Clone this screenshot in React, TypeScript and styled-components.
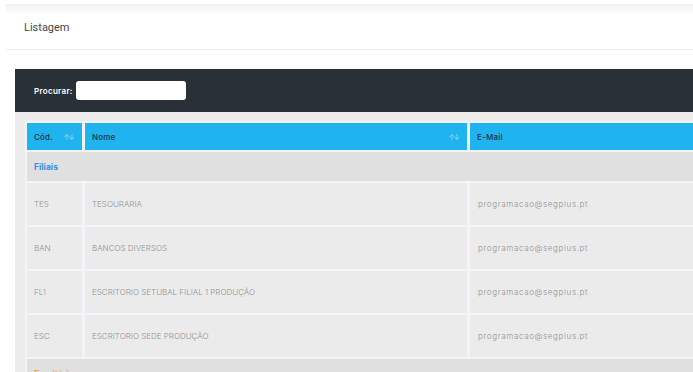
import * as React from "react";
import styled, { createGlobalStyle } from "styled-components";

const GlobalStyle = createGlobalStyle`
  html, body {
    margin: 0;
    padding: 0;
    overflow: hidden;
    background: #ffffff;
  }
`;

const Page = styled.div`
  width: 900px;
  padding: 4px 0 0 6px;
  box-sizing: border-box;
`;

const Card = styled.div`
  background: linear-gradient(#f1f1f1 0px, #ffffff 11px);
`;

const CardHeader = styled.div`
  height: 46px;
  display: flex;
  align-items: center;
  padding-left: 18px;
  border-bottom: 1px solid #ececec;
  box-sizing: border-box;
`;

const Title = styled.h4`
  margin: 0;
  padding-top: 1px;
  font-family: Roboto, "Liberation Sans", sans-serif;
  font-size: 11px;
  font-weight: 400;
  color: #474747;
`;

const CardBody = styled.div`
  padding: 19px 0 0 9px;
`;

const SearchBar = styled.div`
  height: 43px;
  background: #2a3038;
  display: flex;
  align-items: center;
  gap: 3px;
  padding-left: 19px;
  font-family: Inter, "Open Sans", sans-serif;
`;

const SearchLabel = styled.label`
  font-size: 8px;
  font-weight: 600;
  letter-spacing: 0.3px;
  color: #ffffff;
`;

const SearchInput = styled.input`
  width: 110px;
  height: 19px;
  border: none;
  border-radius: 3px;
  background: #ffffff;
  box-sizing: border-box;
  outline: none;
`;

const TablePanel = styled.div`
  background: #ececec;
  padding: 9px 0 0 10px;
`;

const Grid = styled.div`
  display: grid;
  grid-template-columns: 55px 382px 1fr;
  gap: 2px 3px;
  padding: 2px;
  background: #f4f4f6;
  font-family: Inter, "Open Sans", sans-serif;
  font-size: 8px;
`;

const HeadCell = styled.div`
  height: 27px;
  background: #1fb4ef;
  color: #1d3347;
  display: flex;
  align-items: center;
  justify-content: space-between;
  padding: 0 9px 0 7px;
  font-weight: 500;
  letter-spacing: 0.2px;
`;

const SortIcon = styled.span`
  color: #8ed3f2;
  font-size: 8px;
  letter-spacing: -2px;
`;

const GroupCell = styled.div<{ $color: string }>`
  grid-column: 1 / -1;
  height: 29px;
  background: #e0e0e0;
  display: flex;
  align-items: center;
  padding-left: 7px;
  font-weight: 700;
  font-size: 8.5px;
  color: ${(p) => p.$color};
`;

const Cell = styled.div`
  height: 42px;
  background: #ebebeb;
  color: #929292;
  display: flex;
  align-items: center;
  padding-left: 7px;
  font-weight: 300;
`;

const EmailCell = styled(Cell)`
  padding-left: 8px;
  letter-spacing: 0.65px;
`;

const rows = [
  { cod: "TES", nome: "TESOURARIA", email: "programacao@segplus.pt" },
  { cod: "BAN", nome: "BANCOS DIVERSOS", email: "programacao@segplus.pt" },
  { cod: "FL1", nome: "ESCRITORIO SETUBAL FILIAL 1 PRODUÇÃO", email: "programacao@segplus.pt" },
  { cod: "ESC", nome: "ESCRITORIO SEDE PRODUÇÃO", email: "programacao@segplus.pt" },
];

const App = () => {
  return (
    <Page>
      <GlobalStyle />
      <Card>
        <CardHeader>
          <Title>Listagem</Title>
        </CardHeader>
        <CardBody>
          <SearchBar>
            <SearchLabel>Procurar:</SearchLabel>
            <SearchInput type="search" />
          </SearchBar>
          <TablePanel>
            <Grid>
              <HeadCell>
                Cód.<SortIcon>↑↓</SortIcon>
              </HeadCell>
              <HeadCell>
                Nome<SortIcon>↑↓</SortIcon>
              </HeadCell>
              <HeadCell>E-Mail</HeadCell>
              <GroupCell $color="#3b8ee2">Filiais</GroupCell>
              {rows.map((r) => (
                <React.Fragment key={r.cod}>
                  <Cell>{r.cod}</Cell>
                  <Cell>{r.nome}</Cell>
                  <EmailCell>{r.email}</EmailCell>
                </React.Fragment>
              ))}
              <GroupCell $color="#f0a03c">Escritórios</GroupCell>
            </Grid>
          </TablePanel>
        </CardBody>
      </Card>
    </Page>
  );
};

export default App;
